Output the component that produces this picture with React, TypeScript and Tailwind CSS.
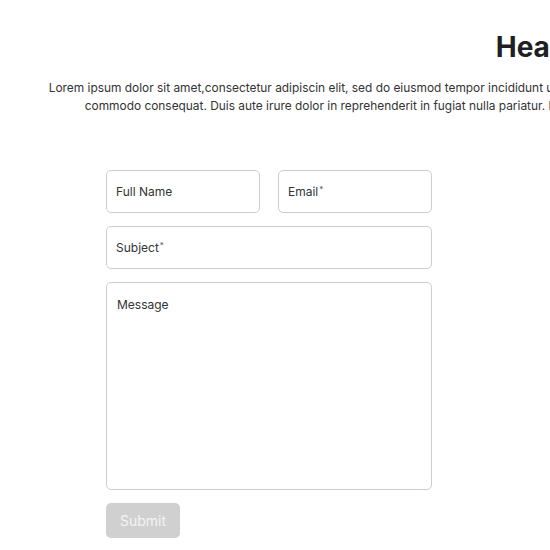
import React from 'react';

const fieldClass =
  'w-full rounded-[5px] border border-[#c9ced4] bg-white px-[10px] text-[12px] text-[#333] outline-none';

const Label: React.FC<{ text: string; required?: boolean }> = ({ text, required }) => (
  <span>
    {text}
    {required && <sup className="ml-[1px] text-[8px] text-[#555]">*</sup>}
  </span>
);

export default function App() {
  const [form, setForm] = React.useState({ name: '', email: '', subject: '', message: '' });

  return (
    <div
      className="w-[1106px] bg-white pb-8 text-[#222]"
      style={{ fontFamily: 'Inter, "Noto Sans", sans-serif' }}
    >
      <div className="text-center">
        <h1 className="pt-[30px] text-[28px] font-bold leading-[34px] text-[#1d1f22]">Heading</h1>
        <p className="mt-[15px] whitespace-nowrap text-[11.9px] leading-[18px] text-[#333]">
          Lorem ipsum dolor sit amet,consectetur adipiscin elit, sed do eiusmod tempor incididunt ut
          labore et dolore magna aliqua. Ut enim ad minim veniam, quis nostrud exercitation ullam.
          <br />
          commodo consequat. Duis aute irure dolor in reprehenderit in fugiat nulla pariatur.
          Excepteur sint occaecat cupidatat non proident, sunt in culpa qui officia deserunt id.
        </p>
      </div>

      <form
        className="ml-[106px] mt-[55px] flex w-[326px] flex-col gap-[13px]"
        onSubmit={(e) => e.preventDefault()}
      >
        <div className="flex gap-[18px]">
          <div className="relative h-[43px] flex-1">
            <input
              className={fieldClass + ' h-full'}
              value={form.name}
              onChange={(e) => setForm({ ...form, name: e.target.value })}
            />
            {!form.name && (
              <div className="pointer-events-none absolute left-[10px] top-[14px] text-[12px] leading-[16px] text-[#333]">
                <Label text="Full Name" />
              </div>
            )}
          </div>
          <div className="relative h-[43px] flex-1">
            <input
              className={fieldClass + ' h-full'}
              value={form.email}
              onChange={(e) => setForm({ ...form, email: e.target.value })}
            />
            {!form.email && (
              <div className="pointer-events-none absolute left-[10px] top-[14px] text-[12px] leading-[16px] text-[#333]">
                <Label text="Email" required />
              </div>
            )}
          </div>
        </div>
        <div className="relative h-[43px]">
          <input
            className={fieldClass + ' h-full'}
            value={form.subject}
            onChange={(e) => setForm({ ...form, subject: e.target.value })}
          />
          {!form.subject && (
            <div className="pointer-events-none absolute left-[10px] top-[14px] text-[12px] leading-[16px] text-[#333]">
              <Label text="Subject" required />
            </div>
          )}
        </div>
        <textarea
          className={fieldClass + ' h-[208px] resize-none py-[14px] leading-[16px] placeholder:text-[#333]'}
          placeholder="Message"
          value={form.message}
          onChange={(e) => setForm({ ...form, message: e.target.value })}
        />
        <div>
          <button
            type="submit"
            className="h-[35px] w-[74px] rounded-[5px] bg-[#d0d0d0] text-[14px] text-[#f4f4f4]"
          >
            Submit
          </button>
        </div>
      </form>
    </div>
  );
}
